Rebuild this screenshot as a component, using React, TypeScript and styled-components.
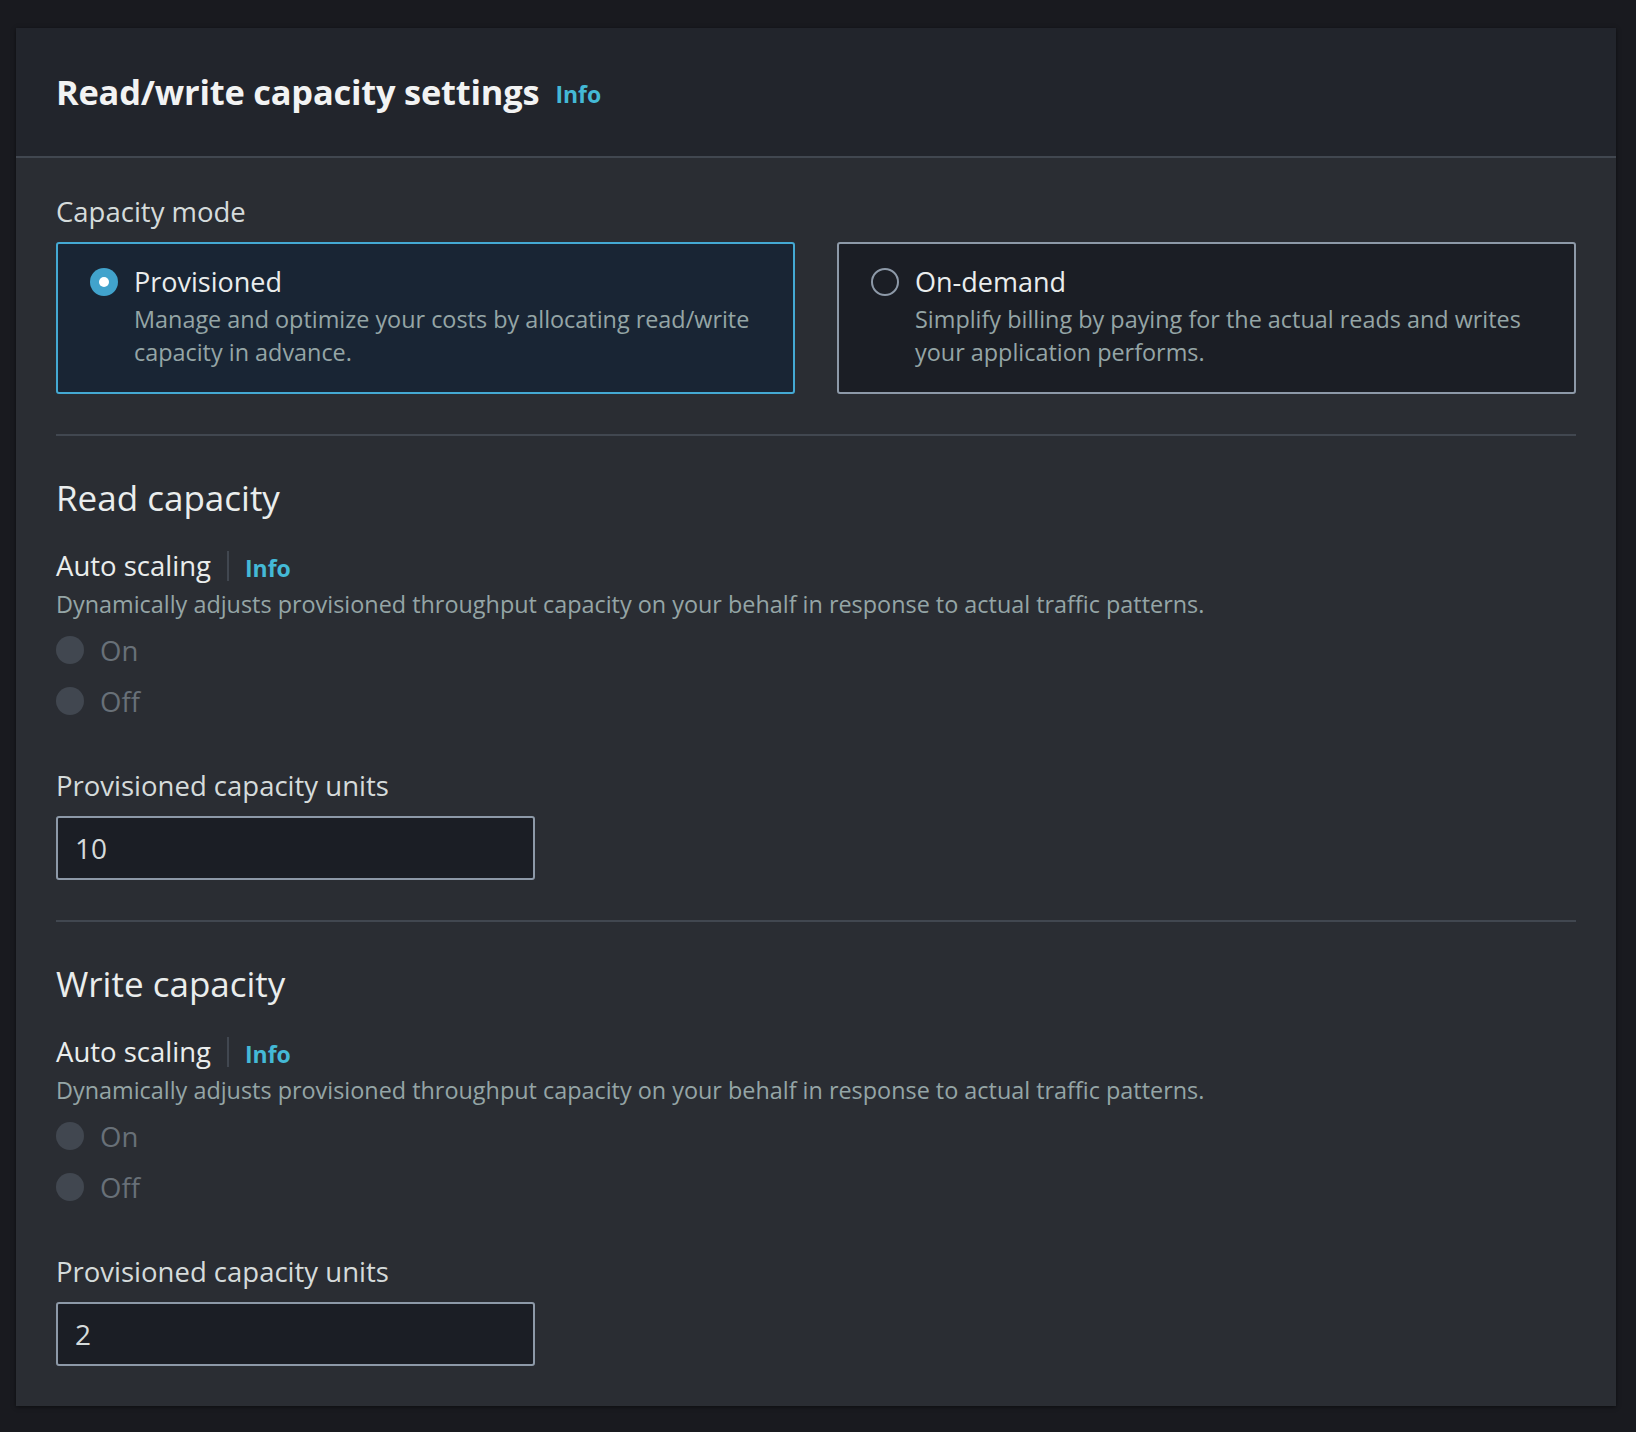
import React from "react";
import styled, { createGlobalStyle } from "styled-components";

const GlobalStyle = createGlobalStyle`
  html, body {
    margin: 0;
    padding: 0;
    background: #191a1f;
  }
  body {
    font-family: "Open Sans", "Liberation Sans", sans-serif;
    -webkit-font-smoothing: antialiased;
  }
  * { box-sizing: border-box; }
`;

const Page = styled.div`
  padding: 28px 20px 26px 16px;
  min-height: 1432px;
`;

const Panel = styled.section`
  background: #2a2d33;
  box-shadow: 0 1px 4px rgba(0, 0, 0, 0.5);
`;

const Header = styled.header`
  height: 130px;
  padding: 0 40px;
  display: flex;
  align-items: center;
  gap: 16px;
  background: #22252c;
  border-bottom: 2px solid #414750;
`;

const Title = styled.h2`
  margin: 0;
  font-size: 34.4px;
  font-weight: 700;
  color: #f2f3f3;
  line-height: 40px;
  letter-spacing: -0.2px;
`;

const InfoLink = styled.a`
  color: #44b9d6;
  font-weight: 700;
  font-size: 23px;
  text-decoration: none;
  line-height: 30px;
  margin-top: 4px;
`;

const Body = styled.div`
  padding: 38px 40px 40px 40px;
  display: flex;
  flex-direction: column;
`;

const FieldLabel = styled.div`
  font-size: 27.5px;
  line-height: 32px;
  color: #d5dbdb;
`;

const ModeLabel = styled(FieldLabel)`
  margin-bottom: 14px;
`;

const Tiles = styled.div`
  display: grid;
  grid-template-columns: 1fr 1fr;
  gap: 42px;
`;

const Tile = styled.label<{ $selected?: boolean }>`
  display: flex;
  gap: 16px;
  align-items: flex-start;
  height: 152px;
  padding: 22px 30px 22px 32px;
  border: 2px solid ${(p) => (p.$selected ? "#44a9d3" : "#8d99a8")};
  border-radius: 3px;
  background: ${(p) => (p.$selected ? "#192534" : "#1b1e25")};
`;

const RadioCircle = styled.span<{ $state: "selected" | "idle" | "disabled" }>`
  flex: none;
  position: relative;
  width: 28px;
  height: 28px;
  border-radius: 50%;
  margin-top: ${(p) => (p.$state === "disabled" ? 0 : 2)}px;
  background: ${(p) =>
    p.$state === "selected" ? "#41a3cc" : p.$state === "disabled" ? "#414750" : "transparent"};
  border: ${(p) => (p.$state === "idle" ? "2px solid #8d99a8" : "none")};
  &::after {
    content: "";
    display: ${(p) => (p.$state === "selected" ? "block" : "none")};
    position: absolute;
    left: 9px;
    top: 9px;
    width: 10px;
    height: 10px;
    border-radius: 50%;
    background: #ffffff;
  }
`;

const TileText = styled.div`
  display: flex;
  flex-direction: column;
  min-width: 0;
`;

const TileTitle = styled.div`
  font-size: 27px;
  line-height: 32px;
  color: #eaeded;
`;

const TileDesc = styled.div`
  font-size: 23.4px;
  line-height: 33px;
  color: #95a5a6;
  margin-top: 5px;
`;

const Divider = styled.hr`
  border: none;
  border-top: 2px solid #414750;
  margin: 40px 0 44px 0;
`;

const SectionTitle = styled.h3`
  margin: 0;
  font-size: 35px;
  font-weight: 400;
  line-height: 36px;
  color: #eaeded;
`;

const LabelRow = styled.div`
  display: flex;
  align-items: center;
  margin-top: 33px;
  font-size: 27.5px;
  line-height: 32px;
  color: #eaeded;
`;

const VSep = styled.span`
  width: 2px;
  height: 30px;
  background: #414750;
  margin: 0 16px;
`;

const Description = styled.div`
  font-size: 23.4px;
  line-height: 30px;
  color: #95a5a6;
  margin-top: 6px;
`;

const RadioGroup = styled.div`
  display: flex;
  flex-direction: column;
  gap: 19px;
  margin-top: 15px;
`;

const RadioRow = styled.div`
  display: flex;
  align-items: center;
  gap: 16px;
  height: 32px;
`;

const DisabledText = styled.span`
  font-size: 27.5px;
  color: #687078;
`;

const UnitsLabel = styled(FieldLabel)`
  margin-top: 53px;
`;

const Input = styled.input`
  margin-top: 14px;
  width: 479px;
  height: 64px;
  padding: 0 17px;
  background: #1b1e25;
  border: 2px solid #8d99a8;
  border-radius: 3px;
  color: #d5dbdb;
  font-family: inherit;
  font-size: 28px;
  outline: none;
`;

function Radio({ state, label }: { state: "selected" | "idle" | "disabled"; label: string }) {
  return (
    <RadioRow>
      <RadioCircle $state={state} />
      <DisabledText>{label}</DisabledText>
    </RadioRow>
  );
}

function CapacitySection({ title, value }: { title: string; value: string }) {
  return (
    <>
      <SectionTitle>{title}</SectionTitle>
      <LabelRow>
        Auto scaling
        <VSep />
        <InfoLink href="#">Info</InfoLink>
      </LabelRow>
      <Description>
        Dynamically adjusts provisioned throughput capacity on your behalf in response to actual traffic patterns.
      </Description>
      <RadioGroup>
        <Radio state="disabled" label="On" />
        <Radio state="disabled" label="Off" />
      </RadioGroup>
      <UnitsLabel>Provisioned capacity units</UnitsLabel>
      <Input defaultValue={value} />
    </>
  );
}

export default function App() {
  return (
    <Page>
      <GlobalStyle />
      <Panel>
        <Header>
          <Title>Read/write capacity settings</Title>
          <InfoLink href="#">Info</InfoLink>
        </Header>
        <Body>
          <ModeLabel>Capacity mode</ModeLabel>
          <Tiles>
            <Tile $selected>
              <RadioCircle $state="selected" />
              <TileText>
                <TileTitle>Provisioned</TileTitle>
                <TileDesc>Manage and optimize your costs by allocating read/write capacity in advance.</TileDesc>
              </TileText>
            </Tile>
            <Tile>
              <RadioCircle $state="idle" />
              <TileText>
                <TileTitle>On-demand</TileTitle>
                <TileDesc>Simplify billing by paying for the actual reads and writes your application performs.</TileDesc>
              </TileText>
            </Tile>
          </Tiles>
          <Divider />
          <CapacitySection title="Read capacity" value="10" />
          <Divider />
          <CapacitySection title="Write capacity" value="2" />
        </Body>
      </Panel>
    </Page>
  );
}
